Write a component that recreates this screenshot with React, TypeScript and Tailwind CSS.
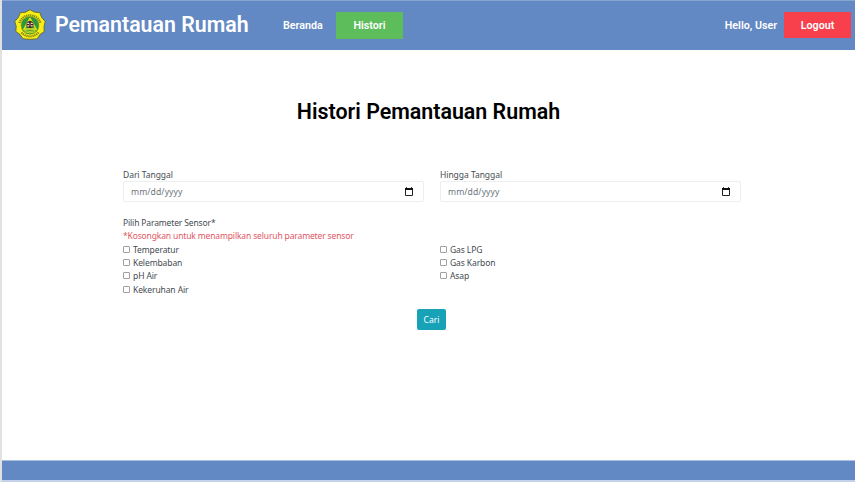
import React from "react";

function Crest() {
  return (
    <svg viewBox="0 0 32 32" className="h-8 w-8 shrink-0" aria-hidden="true">
      <path
        d="M16 .7 20.3 3.1 25.8 3.6 27.6 8.4 31.2 12.4 30 17.5 30.2 22.6 26 25.4 23.3 29.8 16 30.4 9 29.8 6 25.6 1.8 22.4 2.2 17.4.8 12.4 4.4 8.4 6.2 3.8 11.5 3.2Z"
        fill="#f6ef14"
        stroke="#66672c"
        strokeWidth=".9"
        strokeLinejoin="round"
      />
      <path d="M5.5 14A11 11 0 0 1 26.5 14M7.5 23.5A11.2 11.2 0 0 0 24.5 23.5" fill="none" stroke="#55561c" strokeWidth="2.2" strokeDasharray="1.2 .8" opacity=".75" />
      <circle cx="16" cy="16.4" r="8.9" fill="#2c983b" stroke="#8c911d" strokeWidth=".5" />
      <path d="M16 9.4 22 20H10Z" fill="none" stroke="#e8e31d" strokeWidth="1.5" strokeLinejoin="round" />
      <path d="M9 20.4q7 4 14 0M10.5 22.7q5.5 2.4 11 0" fill="none" stroke="#e8e31d" strokeWidth=".9" />
      <circle cx="16" cy="15.6" r="3.5" fill="#43251f" />
      <path d="M13.3 13.8H15v1.2h-1.7zM17 13.8h1.7v1.2H17zM13.3 16.3H15v1.2h-1.7zM17 16.3h1.7v1.2H17z" fill="#f4e3df" />
      <path d="M15.4 13.8h1.2v3.8h-1.2z" fill="#8f7770" />
    </svg>
  );
}

function CalendarIcon() {
  return (
    <svg viewBox="0 0 10 10" className="h-[10px] w-[10px]" aria-hidden="true">
      <path d="M1.5 2h7v6.5h-7z" fill="none" stroke="#222" strokeWidth="1" />
      <path d="M1 1h8v2H1zM2 .3h1v1H2zM7 .3h1v1H7z" fill="#111" />
    </svg>
  );
}

function DateField({ label }: { label: string }) {
  return (
    <div className="w-[301px]">
      <div className="h-[13px] leading-[14px] tracking-[-0.04px]">{label}</div>
      <div className="flex h-[21px] items-center justify-between rounded-[2px] border border-[#eceef0] pr-[9px] pl-[7px]">
        <span className="pt-px text-[8.6px] leading-[13px] tracking-[0.1px] text-[#6c757d]">mm/dd/yyyy</span>
        <CalendarIcon />
      </div>
    </div>
  );
}

function SensorOption({ label }: { label: string }) {
  return (
    <label className="flex h-[13.35px] items-center">
      <input type="checkbox" className="mr-[3px] h-[7px] w-[7px] appearance-none rounded-[1px] border border-[#a0a0a0] bg-white" />
      <span className="leading-[13px] tracking-[-0.1px]">{label}</span>
    </label>
  );
}

export default function App() {
  return (
    <div className="flex h-[482px] w-[855px] flex-col border-l-2 border-[#e2e2e2] bg-white font-['Roboto',sans-serif]">
      <header className="flex h-[50px] shrink-0 items-center border-t border-[#87a4d1] bg-[#6289c3] text-white">
        <div className="ml-3 flex pb-px"><Crest /></div>
        <div className="ml-[9px] w-[194px] pb-[2px] text-[21.35px] leading-6 font-semibold whitespace-nowrap">Pemantauan Rumah</div>
        <nav className="ml-[34px] flex items-center text-[10.7px] font-semibold">
          <a className="w-[40px] pt-[2px]">Beranda</a>
          <a className="ml-[13px] flex h-[27px] w-[67px] items-center justify-center bg-[#5dbd5b] pt-px">Histori</a>
        </nav>
        <div className="mr-1 ml-auto flex items-center pb-px text-[10.7px] font-semibold">
          <span className="pt-[2px]">Hello, User</span>
          <button className="ml-[7px] flex h-[26px] w-[67px] items-center justify-center bg-[#f8404d] pt-[2px]">Logout</button>
        </div>
      </header>

      <main className="flex flex-1 flex-col text-[8.5px] text-[#454b51] font-['Noto_Sans',sans-serif]">
        <h1 className="mt-[48px] text-center font-['Roboto',sans-serif] text-[21.4px] leading-7 font-semibold text-black">Histori Pemantauan Rumah</h1>
        <section className="mt-[42px] ml-[121px] flex gap-4">
          <DateField label="Dari Tanggal" />
          <DateField label="Hingga Tanggal" />
        </section>
        <section className="mt-[14px] ml-[121px]">
          <p className="h-[13px] leading-[13px] tracking-[-0.14px]">Pilih Parameter Sensor*</p>
          <p className="h-[13.4px] leading-[13px] tracking-[-0.14px] text-[#df5663]">*Kosongkan untuk menampilkan seluruh parameter sensor</p>
          <div className="flex">
            <div className="w-[317px]">
              <SensorOption label="Temperatur" />
              <SensorOption label="Kelembaban" />
              <SensorOption label="pH Air" />
              <SensorOption label="Kekeruhan Air" />
            </div>
            <div>
              <SensorOption label="Gas LPG" />
              <SensorOption label="Gas Karbon" />
              <SensorOption label="Asap" />
            </div>
          </div>
        </section>
        <button className="mt-[13.2px] ml-[415px] flex h-[21px] w-[29px] items-center justify-center rounded-[2px] bg-[#17a2b8] pt-px text-white">Cari</button>
      </main>
      <footer className="h-[22px] shrink-0 border-t border-b-2 border-t-[#a9bfdf] border-b-[#c3d2e9] bg-[#6289c3]" />
    </div>
  );
}
